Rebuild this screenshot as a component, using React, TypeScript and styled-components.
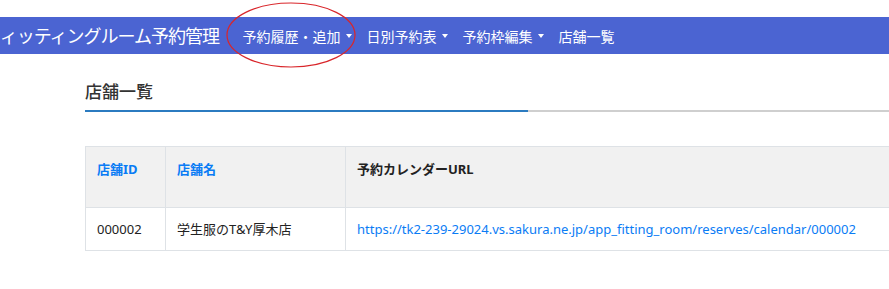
import styled, { createGlobalStyle } from 'styled-components';

const GlobalStyle = createGlobalStyle`
  html, body {
    margin: 0;
    padding: 0;
    background: #fff;
    overflow: hidden;
  }
  body {
    font-family: 'Noto Sans', 'Noto Sans CJK JP', sans-serif;
    color: #212529;
  }
`;

type Store = {
  id: string;
  name: string;
  url: string;
};

const stores: Store[] = [
  {
    id: '000002',
    name: '学生服のT&Y厚木店',
    url: 'https://tk2-239-29024.vs.sakura.ne.jp/app_fitting_room/reserves/calendar/000002',
  },
];

const Page = styled.div`
  position: relative;
  padding-top: 17px;
  width: 889px;
`;

const NavBar = styled.nav`
  display: flex;
  align-items: center;
  height: 37px;
  background: #4b64d2;
  white-space: nowrap;
  overflow: hidden;
`;

const Brand = styled.div`
  margin-left: -17px;
  margin-right: 16px;
  font-size: 18px;
  letter-spacing: -1px;
  color: #fff;
  line-height: 1;
`;

const NavItem = styled.a<{ $dropdown?: boolean }>`
  display: flex;
  align-items: center;
  padding: 0 7.5px;
  font-size: 14px;
  color: #fff;
  text-decoration: none;
  &::after {
    content: '';
    display: ${(p) => (p.$dropdown ? 'inline-block' : 'none')};
    margin-left: 5px;
    border-top: 4px solid #fff;
    border-left: 3.5px solid transparent;
    border-right: 3.5px solid transparent;
  }
`;

const Mark = styled.svg`
  position: absolute;
  left: 225px;
  top: 1px;
  pointer-events: none;
`;

const Main = styled.main`
  padding: 26px 0 0 85px;
`;

const HeadingBox = styled.div`
  position: relative;
  border-bottom: 2px solid #cfcfcf;
  padding-bottom: 6px;
  &::after {
    content: '';
    position: absolute;
    left: 0;
    bottom: -2px;
    width: 443px;
    height: 2px;
    background: #2b7bc0;
  }
`;

const Heading = styled.h2`
  margin: 0;
  font-size: 17px;
  font-weight: 500;
  line-height: 24px;
  color: #333;
`;

const Table = styled.table`
  margin-top: 34px;
  width: 1100px;
  table-layout: fixed;
  border-collapse: collapse;
  font-size: 13px;
`;

const HeadCell = styled.th<{ $link?: boolean; $w?: number }>`
  box-sizing: border-box;
  width: ${(p) => (p.$w ? `${p.$w}px` : 'auto')};
  height: 61px;
  padding: 12px 11px;
  text-align: left;
  vertical-align: top;
  font-weight: 700;
  line-height: 20px;
  color: ${(p) => (p.$link ? '#0a7cf5' : '#222')};
  background: #f1f1f1;
  border: 1px solid #dee2e6;
`;

const Cell = styled.td`
  padding: 11px 11px;
  line-height: 20px;
  color: #222;
  border: 1px solid #dee2e6;
  white-space: nowrap;
`;

const Link = styled.a`
  color: #0a7cf5;
  text-decoration: none;
`;

export default function App() {
  return (
    <>
      <GlobalStyle />
      <Page>
        <NavBar>
          <Brand>フィッティングルーム予約管理</Brand>
          <NavItem $dropdown>予約履歴・追加</NavItem>
          <NavItem $dropdown>日別予約表</NavItem>
          <NavItem $dropdown>予約枠編集</NavItem>
          <NavItem>店舗一覧</NavItem>
        </NavBar>
        <Mark width="134" height="68" viewBox="0 0 134 68">
          <ellipse cx="66" cy="34" rx="64" ry="32" fill="none" stroke="#d9262b" strokeWidth="1.2" />
        </Mark>
        <Main>
          <HeadingBox>
            <Heading>店舗一覧</Heading>
          </HeadingBox>
          <Table>
            <thead>
              <tr>
                <HeadCell $link $w={80}>店舗ID</HeadCell>
                <HeadCell $link $w={180}>店舗名</HeadCell>
                <HeadCell>予約カレンダーURL</HeadCell>
              </tr>
            </thead>
            <tbody>
              {stores.map((s) => (
                <tr key={s.id}>
                  <Cell>{s.id}</Cell>
                  <Cell>{s.name}</Cell>
                  <Cell>
                    <Link href="#">{s.url}</Link>
                  </Cell>
                </tr>
              ))}
            </tbody>
          </Table>
        </Main>
      </Page>
    </>
  );
}
